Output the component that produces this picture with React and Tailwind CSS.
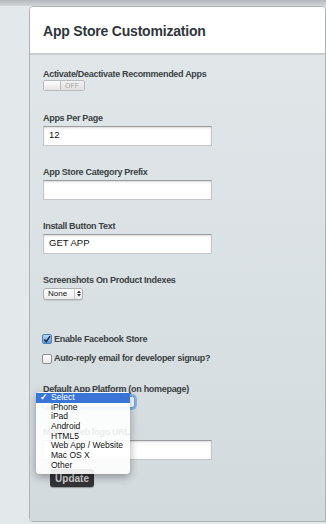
import React from "react";

const font = { fontFamily: '"Liberation Sans", Arial, sans-serif' };

function Label({ children, className = "" }) {
  return (
    <div className={"text-[9px] leading-[11px] font-bold tracking-[-0.3px] text-[#3a3f44] " + className}>
      {children}
    </div>
  );
}

function TextInput({ value = "", className = "" }) {
  return (
    <div
      className={
        "w-[169px] h-[20px] bg-white border border-[#c4c7c9] border-t-[#9a9da0] shadow-[inset_0_1px_2px_rgba(0,0,0,0.15)] flex items-center px-[5px] text-[9.5px] text-[#111] " +
        className
      }
    >
      {value}
    </div>
  );
}

function Check({ checked }) {
  return (
    <div
      className={
        "w-[10px] h-[10px] rounded-[2px] border flex items-center justify-center " +
        (checked
          ? "border-[#4a7fb8] bg-gradient-to-b from-[#bcd7f5] to-[#5a9be0]"
          : "border-[#8e9194] bg-gradient-to-b from-white to-[#e9e9e9]")
      }
    >
      {checked && (
        <svg width="9" height="9" viewBox="0 0 9 9">
          <path d="M1.5 4.5 L3.6 7 L8 0.8" fill="none" stroke="#1b2a3a" strokeWidth="1.6" />
        </svg>
      )}
    </div>
  );
}

export default function App() {
  const items = ["iPhone", "iPad", "Android", "HTML5", "Web App / Website", "Mac OS X", "Other"];
  return (
    <div style={font} className="w-[326px] h-[524px] overflow-hidden relative bg-[#e3e8ea]">
      <div className="h-[6px] bg-gradient-to-b from-[#b4b8bb] to-[#d2d6d8]" />
      <div className="flex h-[518px]">
        <div className="w-[29px] shrink-0" />
        <div className="flex-1 flex flex-col border-l border-t border-r border-b border-[#aeb3b6] rounded-t-[4px] rounded-bl-[4px] h-[516px] overflow-hidden">
          <div className="h-[48px] bg-white border-b-2 border-[#c9cdd0] flex items-center pl-[13px]">
            <div className="text-[14px] font-bold text-[#2f363c] tracking-[-0.2px] mt-[2px]">
              App Store Customization
            </div>
          </div>
          <div className="flex-1 bg-gradient-to-b from-[#e1e7e9] to-[#d3dadd] pl-[13px] pt-[14px] relative">
            <Label>Activate/Deactivate Recommended Apps</Label>
            <div className="mt-[0px] w-[42px] h-[11px] flex border border-[#b9bcbe] rounded-[2px] overflow-hidden">
              <div className="w-[17px] bg-gradient-to-b from-white to-[#e4e4e4] border-r border-[#bdbdbd]" />
              <div className="flex-1 bg-gradient-to-b from-[#f1f1f1] to-[#e0e0e0] text-[7px] leading-[9px] text-[#a6a6a6] pl-[4px]">
                OFF
              </div>
            </div>

            <Label className="mt-[22px]">Apps Per Page</Label>
            <TextInput value="12" className="mt-[1.5px]" />

            <Label className="mt-[21.5px]">App Store Category Prefix</Label>
            <TextInput className="mt-[1.5px]" />

            <Label className="mt-[21.5px]">Install Button Text</Label>
            <TextInput value="GET APP" className="mt-[1.5px]" />

            <Label className="mt-[21.5px]">Screenshots On Product Indexes</Label>
            <div className="mt-[1.5px] w-[40px] h-[12px] rounded-[3px] border border-[#aeb1b4] bg-gradient-to-b from-white to-[#ececec] flex items-center text-[8px] text-[#111] shadow-[0_1px_1px_rgba(0,0,0,0.1)]">
              <span className="pl-[4px] w-[30px]">None</span>
              <div className="h-full border-l border-[#c8c8c8] flex-1 flex items-center justify-center">
                <svg width="4" height="7" viewBox="0 0 4 7">
                  <path d="M0 3 L2 0.5 L4 3 Z M0 4 L2 6.5 L4 4 Z" fill="#333" />
                </svg>
              </div>
            </div>

            <div className="mt-[33px] flex items-center gap-[2px] ml-[-1px]">
              <Check checked />
              <span className="text-[9px] font-bold tracking-[-0.3px] text-[#3a3f44]">Enable Facebook Store</span>
            </div>
            <div className="mt-[6px] flex items-center gap-[2px] ml-[-1px]">
              <Check />
              <span className="text-[9px] font-bold tracking-[-0.3px] text-[#3a3f44]">Auto-reply email for developer signup?</span>
            </div>

            <Label className="mt-[18px]">Default App Platform (on homepage)</Label>
            <div className="mt-[1.5px] w-[92px] h-[12px] rounded-[3px] border border-[#6a9fe0] shadow-[0_0_0_2px_rgba(90,150,230,0.6)] bg-white" />

            <Label className="mt-[19px]">Mobile Web logo URL</Label>
            <TextInput className="mt-[2px]" />

            <div className="mt-[9px] ml-[7px] w-[44px] h-[18px] rounded-[3px] bg-[#333436] text-[#d9dadb] text-[10px] font-bold flex items-center justify-center shadow-[0_1px_1px_rgba(0,0,0,0.3)]">
              Update
            </div>

            <div className="absolute left-[6px] top-[337px] w-[94px] bg-white/90 rounded-[4px] shadow-[0_3px_8px_rgba(0,0,0,0.35)] pt-[0.5px] pb-[4px] text-[8.5px] text-[#111]">
              <div className="h-[10px] bg-[#3875d7] text-white flex items-center">
                <span className="w-[15px] text-center text-[9px] font-bold">✓</span>
                <span>Select</span>
              </div>
              {items.map((t) => (
                <div key={t} className="h-[9.7px] leading-[9.7px] pl-[15px]">
                  {t}
                </div>
              ))}
            </div>
          </div>
        </div>
      </div>
    </div>
  );
}
